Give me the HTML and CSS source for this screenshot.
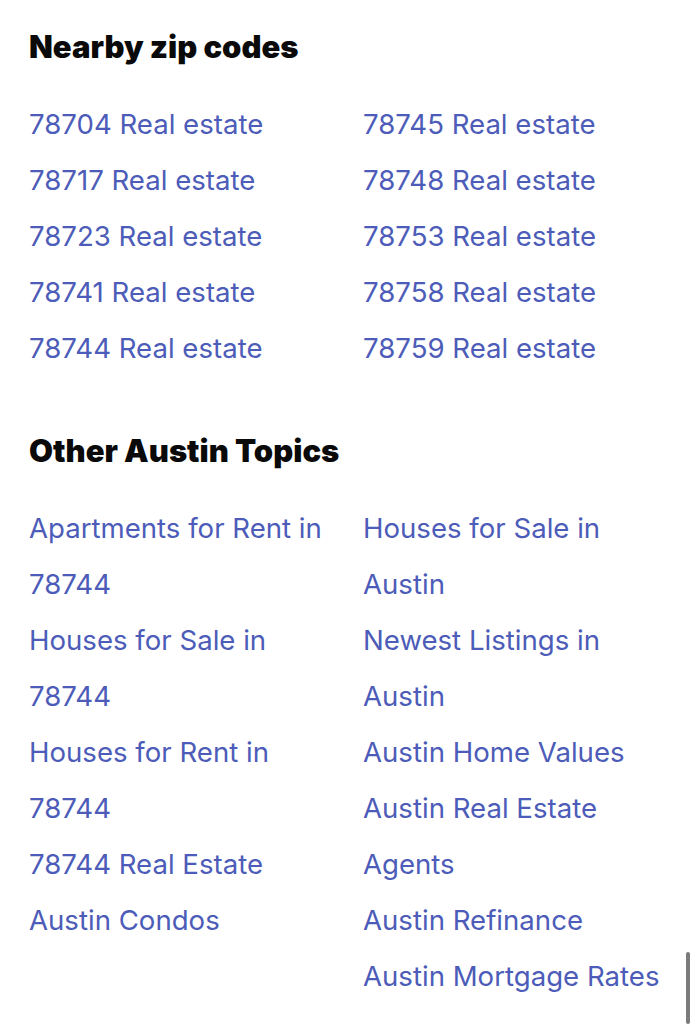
FILE: index.html
```html
<!DOCTYPE html>
<html lang="en">
<head>
<meta charset="utf-8">
<title>Austin Topics</title>
<link rel="stylesheet" href="styles.css">
</head>
<body>
<main class="page">
  <section class="block">
    <h2 class="block-title">Nearby zip codes</h2>
    <ul class="link-grid">
      <li><a href="#">78704 Real estate</a></li>
      <li><a href="#">78745 Real estate</a></li>
      <li><a href="#">78717 Real estate</a></li>
      <li><a href="#">78748 Real estate</a></li>
      <li><a href="#">78723 Real estate</a></li>
      <li><a href="#">78753 Real estate</a></li>
      <li><a href="#">78741 Real estate</a></li>
      <li><a href="#">78758 Real estate</a></li>
      <li><a href="#">78744 Real estate</a></li>
      <li><a href="#">78759 Real estate</a></li>
    </ul>
  </section>
  <section class="block block-topics">
    <h2 class="block-title">Other Austin Topics</h2>
    <div class="link-grid">
      <ul class="link-col">
        <li><a href="#">Apartments for Rent in 78744</a></li>
        <li><a href="#">Houses for Sale in 78744</a></li>
        <li><a href="#">Houses for Rent in 78744</a></li>
        <li><a href="#">78744 Real Estate</a></li>
        <li><a href="#">Austin Condos</a></li>
      </ul>
      <ul class="link-col">
        <li><a href="#">Houses for Sale in Austin</a></li>
        <li><a href="#">Newest Listings in Austin</a></li>
        <li><a href="#">Austin Home Values</a></li>
        <li><a href="#">Austin Real Estate Agents</a></li>
        <li><a href="#">Austin Refinance</a></li>
        <li><a href="#">Austin Mortgage Rates</a></li>
      </ul>
    </div>
  </section>
</main>
<div class="scroll-thumb"></div>
</body>
</html>
```
FILE: styles.css
```css
html, body {
  margin: 0;
  padding: 0;
  background: #ffffff;
}

body {
  font-family: Inter, "Noto Sans", "Liberation Sans", sans-serif;
  color: #111111;
}

.page {
  padding: 27px 28px 0 29px;
}

.block-title {
  margin: 0;
  font-size: 31px;
  line-height: 40px;
  font-weight: 900;
  letter-spacing: 0;
  color: #0a0a0a;
}

.block-topics {
  margin-top: 55px;
}

.link-grid {
  list-style: none;
  margin: 29px 0 0;
  padding: 0;
  display: grid;
  grid-template-columns: 1fr 1fr;
  column-gap: 28px;
}

.link-col {
  list-style: none;
  margin: 0;
  padding: 0;
}

.link-grid li {
  font-size: 27.6px;
  line-height: 56px;
}

.link-grid a {
  color: #4c5cb8;
  text-decoration: none;
}

.scroll-thumb {
  position: fixed;
  left: 686px;
  top: 952px;
  width: 4px;
  height: 72px;
  border-radius: 2px;
  background: #7b7b7b;
}
```
